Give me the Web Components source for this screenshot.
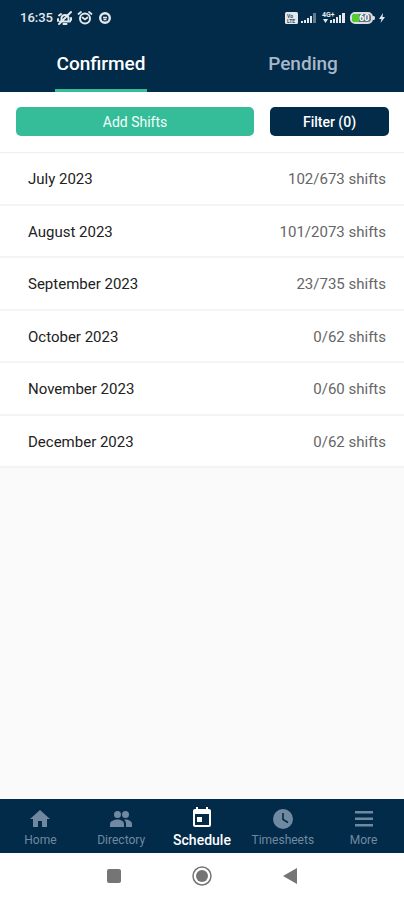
<!DOCTYPE html>
<html lang="en">
<head>
<meta charset="utf-8">
<meta name="viewport" content="width=device-width, initial-scale=1">
<title>Schedule</title>
<style>
  html, body { height: 100%; margin: 0; }
  body {
    --navy: #012b49; --green: #35bd99; --muted: #7189a0; --line: #eeeeee;
    font-family: Roboto, "Liberation Sans", sans-serif;
    background: #fafafa; color: #222;
  }
</style>
</head>
<body>
<schedule-app></schedule-app>
<script>
const define = (name, html) => customElements.define(name, class extends HTMLElement {
  constructor() {
    super();
    const t = document.createElement('template');
    t.innerHTML = html;
    this.attachShadow({ mode: 'open' }).append(t.content.cloneNode(true));
  }
});

define('status-bar', `
<style>
  :host { display: flex; justify-content: space-between; align-items: center; height: 36px; padding: 0 18px 0 20px; background: var(--navy); color: #e4e8ec; }
  div { display: flex; align-items: center; }
  .left { gap: 4px; }
  .right { gap: 3px; }
  time { font-size: 13px; line-height: 16px; font-weight: 500; }
  svg { display: block; }
  text { font-family: Roboto, sans-serif; font-weight: 700; }
</style>
<div class="left">
  <time>16:35</time>
  <svg width="16" height="16" viewBox="0 0 16 16" fill="none" stroke="currentColor" stroke-width="2" stroke-linecap="round">
    <path d="M3 11.500h10M4.500 11V7.500a3.700 3.700 0 0 1 7 0V11M2 14L14 2M6.500 14h3M2 5.500L4 4M14 8v2M1 9v2"/>
  </svg>
  <svg width="16" height="16" viewBox="0 0 16 16" fill="none" stroke="currentColor" stroke-width="2" stroke-linecap="round">
    <circle cx="8" cy="8.500" r="5"/><path d="M1.500 4L4 2M14.500 4L12 2M5.500 7.500L8 9.500l2.500-2" stroke-width="1.700"/>
  </svg>
  <svg width="14" height="16" viewBox="0 0 14 16" fill="none" stroke="currentColor">
    <circle cx="8" cy="8" r="4.800" stroke-width="2.400"/><path d="M6 7.500h4M6.500 9.500h3" stroke-width="1.300"/>
  </svg>
</div>
<div class="right">
  <svg width="13" height="12" viewBox="0 0 13 12"><rect width="13" height="12" rx="1.500" fill="#e4e8ec"/><text x="2" y="5.500" font-size="5" fill="#34495b">Vo</text><text x="2" y="10.500" font-size="5" fill="#34495b">LTE</text></svg>
  <svg width="16" height="12" viewBox="0 0 16 12" fill="#e4e8ec"><path d="M0 9h2v2H0zM3 8h2v3H3zM6 6h2v5H6zM9 4h2v7H9z"/><path d="M12 1h3v10h-3z" fill="#63798c"/></svg>
  <svg width="27" height="14" viewBox="0 0 27 14" fill="#e4e8ec"><text x="2" y="6" font-size="7">4G+</text><path d="M3 8h5L5.500 12zM10 9h2v3h-2zM13 8h2v4h-2zM16 6h2v6h-2zM19 4h2v8h-2zM22 2h3v10h-3z"/></svg>
  <svg width="25" height="12" viewBox="0 0 25 12"><rect x="1" y="1" width="21" height="10" rx="4" fill="#5e7080" stroke="#d9dee3" stroke-width="2"/><path d="M5 2h4v8H5a3 3 0 0 1-3-3V5a3 3 0 0 1 3-3z" fill="#54cf27"/><path d="M23 4h1q1 0 1 2t-1 2h-1z" fill="#d9dee3"/><text x="9" y="9" font-size="9" fill="#fff">60</text></svg>
  <svg width="8" height="12" viewBox="0 0 8 12" fill="#e4e8ec"><path d="M5 1L1 7h2.500L2.500 11 7 5H4.500z"/></svg>
</div>`);

define('tab-bar', `
<style>
  :host { display: flex; height: 56px; background: var(--navy); }
  div { display: flex; flex: 1; }
  ::slotted(tab-item) { flex: 1; }
</style>
<div role="tablist"><slot></slot></div>`);

define('tab-item', `
<style>
  :host { display: flex; justify-content: center; color: #a9b7ca; }
  button { font: 500 19px/24px Roboto, sans-serif; color: inherit; background: none; border: 0; border-bottom: 3px solid transparent; padding: 2px 1px 0; cursor: pointer; }
  :host([selected]) { color: #fff; }
  :host([selected]) button { border-color: var(--green); }
</style>
<button role="tab"><slot></slot></button>`);

define('action-button', `
<style>
  :host { display: block; }
  button { display: block; width: 100%; height: 29px; padding: 1px 0 0; border: 0; border-radius: 5px; background: var(--green); color: #f2fffb; font: 400 14px/20px Roboto, sans-serif; cursor: pointer; }
  :host([dark]) button { background: var(--navy); color: #fff; font-weight: 500; }
</style>
<button><slot></slot></button>`);

define('tool-row', `
<style>
  :host { display: grid; grid-template-columns: 2fr 1fr; gap: 16px; padding: 15px 15px 16px 16px; background: #fff; border-bottom: 1px solid var(--line); }
</style>
<slot></slot>`);

define('month-list', `
<style>
  :host { display: flex; flex-direction: column; min-height: 315px; background: #fff; }
  ::slotted(month-row) { flex: 1; }
</style>
<slot></slot>`);

define('month-row', `
<style>
  :host { display: flex; justify-content: space-between; align-items: center; box-sizing: border-box; padding: 2px 18px 0 28px; border-bottom: 2px solid #f4f4f4; font-size: 15px; line-height: 20px; color: #222; }
  .count { color: #666; }
</style>
<span><slot></slot></span><span class="count"><slot name="count"></slot></span>`);

define('nav-item', `
<style>
  :host { display: block; color: var(--muted); }
  a { display: flex; flex-direction: column; align-items: center; gap: 1px; padding-top: 8px; color: inherit; text-decoration: none; font-size: 12px; line-height: 16px; }
  ::slotted(svg) { display: block; width: 24px; height: 24px; fill: currentColor; }
  :host([selected]) { color: #fff; }
  :host([selected]) a { font-size: 14px; font-weight: 500; }
</style>
<a href="#"><slot name="icon"></slot><span><slot></slot></span></a>`);

define('bottom-nav', `
<style>
  :host { display: block; background: var(--navy); }
  nav { display: grid; grid-template-columns: repeat(5, 1fr); height: 54px; }
</style>
<nav><slot></slot></nav>`);

define('system-nav', `
<style>
  :host { display: flex; justify-content: center; align-items: center; gap: 64px; height: 47px; background: #fff; }
  button { display: block; width: 24px; height: 24px; padding: 0; border: 0; background: none; }
  svg { display: block; fill: #757575; }
</style>
<button aria-label="Recent apps"><svg width="24" height="24"><rect x="5" y="4" width="14" height="14" rx="2"/></svg></button>
<button aria-label="Home"><svg width="24" height="24"><circle cx="12" cy="11" r="9" fill="none" stroke="#757575" stroke-width="1.500"/><circle cx="12" cy="11" r="6"/></svg></button>
<button aria-label="Back"><svg width="24" height="24"><path d="M19 3v16L5 11z"/></svg></button>`);

define('schedule-app', `
<style>
  :host { display: flex; flex-direction: column; min-height: 100vh; }
  main { flex: 1; }
</style>
<status-bar></status-bar>
<tab-bar><tab-item selected>Confirmed</tab-item><tab-item>Pending</tab-item></tab-bar>
<main>
  <tool-row><action-button>Add Shifts</action-button><action-button dark>Filter (0)</action-button></tool-row>
  <month-list>
    <month-row>July 2023<span slot="count">102/673 shifts</span></month-row>
    <month-row>August 2023<span slot="count">101/2073 shifts</span></month-row>
    <month-row>September 2023<span slot="count">23/735 shifts</span></month-row>
    <month-row>October 2023<span slot="count">0/62 shifts</span></month-row>
    <month-row>November 2023<span slot="count">0/60 shifts</span></month-row>
    <month-row>December 2023<span slot="count">0/62 shifts</span></month-row>
  </month-list>
</main>
<bottom-nav>
  <nav-item><svg slot="icon" viewBox="0 0 24 24"><path d="M10 20v-6h4v6h5v-8h3L12 3 2 12h3v8z"/></svg>Home</nav-item>
  <nav-item><svg slot="icon" viewBox="0 0 24 24"><path d="M16.500 11a3.500 3.500 0 1 0 0-7 3.500 3.500 0 0 0 0 7zM8.500 11a3.500 3.500 0 1 0 0-7 3.500 3.500 0 0 0 0 7zM8.500 12.500C5.500 12.500 1 14 1 17v3h14v-3c0-3-3.500-4.500-6.500-4.500zM16.500 12.500l-1.500.2c1.300 1 2 2.500 2 4.300v3h6v-3c0-3-3.500-4.500-6.500-4.500z"/></svg>Directory</nav-item>
  <nav-item selected><svg slot="icon" viewBox="0 0 24 24"><path d="M7 10h5v5H7zM16 0v2H8V0H6v2H5a2 2 0 0 0-2 2v14c0 1.100.9 2 2 2h14a2 2 0 0 0 2-2V4a2 2 0 0 0-2-2h-1V0h-2zm3 18H5V7h14v11z"/></svg>Schedule</nav-item>
  <nav-item><svg slot="icon" viewBox="0 0 24 24"><circle cx="12" cy="12" r="10"/><path d="M12 6v6.500l5 3" fill="none" stroke="#012b49" stroke-width="1.600"/></svg>Timesheets</nav-item>
  <nav-item><svg slot="icon" viewBox="0 0 24 24"><path d="M3 4h18v2.500H3zM3 10.500h18V13H3zM3 17h18v2.500H3z"/></svg>More</nav-item>
</bottom-nav>
<system-nav></system-nav>`);
</script>
</body>
</html>
